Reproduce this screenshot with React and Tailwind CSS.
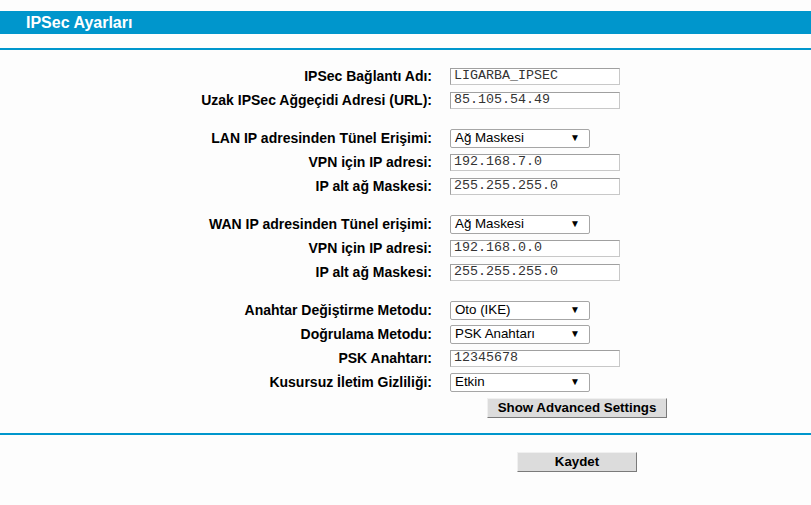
const Label = ({ children }) => (
  <div className="w-[432px] shrink-0 text-right font-bold text-[14px] text-black">{children}</div>
);

function TextRow({ label, value }) {
  return (
    <div className="flex items-center h-[24px]">
      <Label>{label}</Label>
      <div className="ml-[18px] w-[170px] h-[17px] border border-[#c8c8c8] border-t-[#a0a0a0] border-l-[#a0a0a0] bg-white flex items-center px-[3px] font-['Liberation_Mono',monospace] text-[13.33px] text-[#333]">
        {value}
      </div>
    </div>
  );
}

function SelectRow({ label, value }) {
  return (
    <div className="flex items-center h-[24px]">
      <Label>{label}</Label>
      <div className="ml-[18px] w-[140px] h-[19px] border border-[#a6a6a6] rounded-[2px] bg-white flex items-center justify-between pl-[4px] pr-[9px] text-[13.33px] text-black">
        <span>{value}</span>
        <span className="text-[10px] leading-none">▼</span>
      </div>
    </div>
  );
}

const Spacer = () => <div className="h-[14px]" />;

export default function App() {
  return (
    <div className="w-[811px] h-[505px] bg-[#fdfdfd] font-['Liberation_Sans',Arial,sans-serif] pt-[11px]">
      <div className="h-[23px] bg-[#0096cc] flex items-center pl-[26px]">
        <h1 className="text-white font-bold text-[16px]">IPSec Ayarları</h1>
      </div>
      <div className="mt-[14px] h-[2px] bg-[#0096cc]" />

      <div className="pt-[14px]">
        <TextRow label="IPSec Bağlantı Adı:" value="LIGARBA_IPSEC" />
        <TextRow label="Uzak IPSec Ağgeçidi Adresi (URL):" value="85.105.54.49" />
        <Spacer />
        <SelectRow label="LAN IP adresinden Tünel Erişimi:" value="Ağ Maskesi" />
        <TextRow label="VPN için IP adresi:" value="192.168.7.0" />
        <TextRow label="IP alt ağ Maskesi:" value="255.255.255.0" />
        <Spacer />
        <SelectRow label="WAN IP adresinden Tünel erişimi:" value="Ağ Maskesi" />
        <TextRow label="VPN için IP adresi:" value="192.168.0.0" />
        <TextRow label="IP alt ağ Maskesi:" value="255.255.255.0" />
        <Spacer />
        <SelectRow label="Anahtar Değiştirme Metodu:" value="Oto (IKE)" />
        <SelectRow label="Doğrulama Metodu:" value="PSK Anahtarı" />
        <TextRow label="PSK Anahtarı:" value="12345678" />
        <SelectRow label="Kusursuz İletim Gizliliği:" value="Etkin" />
        <div className="flex h-[24px] items-end">
          <button className="ml-[487px] w-[180px] h-[20px] bg-[#dcdcdc] border border-[#f0f0f0] border-r-[#7a7a7a] border-b-[#7a7a7a] font-bold text-[13.33px] text-black leading-none">
            Show Advanced Settings
          </button>
        </div>
      </div>

      <div className="mt-[15px] h-[2px] bg-[#0096cc]" />
      <div className="flex pt-[17px]">
        <button className="ml-[517px] w-[120px] h-[20px] bg-[#dcdcdc] border border-[#f0f0f0] border-r-[#7a7a7a] border-b-[#7a7a7a] font-bold text-[13.33px] text-black leading-none">
          Kaydet
        </button>
      </div>
    </div>
  );
}
